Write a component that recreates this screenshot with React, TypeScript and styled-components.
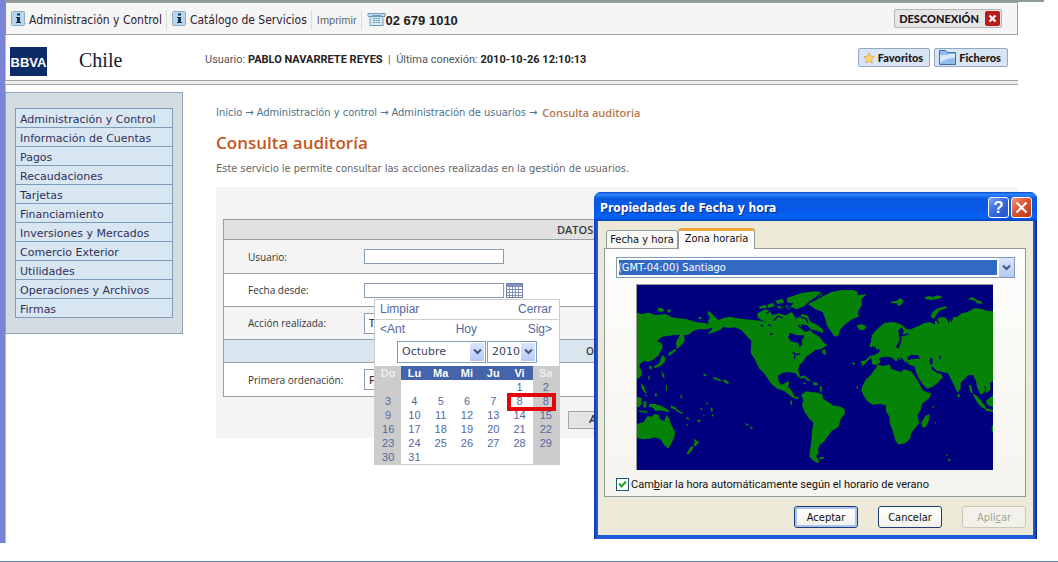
import React from 'react';
import styled, { createGlobalStyle } from 'styled-components';

const humanist = '"Open Sans", "Noto Sans", sans-serif';
const arial = '"Liberation Sans", Arial, sans-serif';
const verdana = '"DejaVu Sans", Verdana, sans-serif';
const tahoma = '"DejaVu Sans Condensed", "DejaVu Sans", Tahoma, sans-serif';

const GlobalStyle = createGlobalStyle`
  *, *::before, *::after { box-sizing: border-box; }
  body { margin: 0; background: #fff; color: #333; font-family: ${humanist}; font-size: 10px; }
  button, input, select { font: inherit; margin: 0; color: inherit; }
  h1, h2, p, ul, ol { margin: 0; padding: 0; }
  ul, ol { list-style: none; }
  a { color: inherit; text-decoration: none; }
`;

const Desktop = styled.div`
  position: relative;
  min-height: 100vh;
  display: flex;
  flex-direction: column;
  border-bottom: 1px solid #5f7fae;
`;
const Browser = styled.div`
  flex: 1;
  margin-bottom: 18px;
  border-left: 5px solid #7984d4;
  box-shadow: inset 1px 0 0 #b9bcc8;
`;
const TopEdge = styled.div`
  height: 2px;
  margin-right: 14px;
  background: #8f9d91;
`;
const Site = styled.div`
  margin-right: 40px;
`;
const UtilityBar = styled.header`
  height: 33px;
  display: flex;
  align-items: center;
  padding: 3px 15px 0 5px;
  background: #f5f5f5;
  border: 1px solid #a0a0a0;
  border-left-color: #8c8c8c;
`;
const UtilityLink = styled.a<{ $muted?: boolean }>`
  display: flex;
  align-items: center;
  gap: 4px;
  height: 20px;
  padding-right: 4px;
  margin-right: 5px;
  border-right: 1px solid #dcdcdc;
  font: ${p => (p.$muted ? '11px' : '12px')} ${p => (p.$muted ? arial : tahoma)};
  color: ${p => (p.$muted ? '#666' : '#2e2030')};
  svg { margin-top: -3px; }
`;
const Phone = styled.span`
  display: flex;
  align-items: center;
  font: bold 13px ${arial};
  color: #222;
  svg { margin-top: -2px; }
`;
const Push = styled.span`
  flex: 1;
`;
const SmallButton = styled.button<{ $tone: 'gray' | 'blue' }>`
  height: 19px;
  display: flex;
  align-items: center;
  gap: 3px;
  padding: 0 6px 0 4px;
  border: 1px solid ${p => (p.$tone === 'gray' ? '#b4b4b4' : '#92a9c0')};
  border-radius: 2px;
  background: ${p => (p.$tone === 'gray' ? '#e6e6e6' : '#d7e6f2')};
  color: #1c1416;
  font: 900 11px Lato, sans-serif;
  white-space: nowrap;
`;
const LogoutButton = styled(SmallButton)`
  gap: 6px;
  padding: 0 1px 0 4px;
  margin-top: -3px;
`;
const BrandBar = styled.div`
  display: flex;
  align-items: center;
  height: 45px;
  padding: 0 10px 0 5px;
`;
const Rule = styled.div`
  height: 5px;
  border: solid #a2a2a2;
  border-width: 1px 0;
  background: #ececec;
`;
const Logo = styled.span`
  width: 37px;
  height: 29px;
  margin-top: 8px;
  display: flex;
  align-items: center;
  justify-content: center;
  padding-top: 2px;
  background: #0b2c66;
  color: #fff;
  font: bold 13px ${arial};
`;
const Country = styled.span`
  width: 158px;
  padding: 6px 0 0 32px;
  font: 20px "Liberation Serif", serif;
  color: #10182c;
`;
const Session = styled.span`
  padding-top: 3px;
  color: #555;
  font: 11px Roboto, sans-serif;
  white-space: nowrap;
  b { color: #222; }
`;
const Actions = styled.div`
  display: flex;
  gap: 4px;
`;
const Columns = styled.div`
  display: flex;
  align-items: flex-start;
  padding-top: 7px;
`;
const Sidebar = styled.nav`
  flex: none;
  width: 178px;
  padding: 15px 9px;
  background: #d4dce1;
  border: 1px solid #8ba5bc;
`;
const Menu = styled.ul`
  border: 1px solid #7c9cba;
  border-bottom: 0;
  background: #d8e6f2;
`;
const MenuItem = styled.li`
  height: 19px;
  padding-left: 4px;
  border-bottom: 1px solid #7c9cba;
  font: 11px/22px ${verdana};
  color: #30305a;
  white-space: nowrap;
`;
const Main = styled.main`
  flex: 1;
  min-width: 0;
  margin: 0 40px 0 33px;
`;
const Crumbs = styled.ol`
  display: flex;
  gap: 3px;
  margin-top: 14px;
  font: 11px/14px ${tahoma};
  color: #4e7089;
  white-space: nowrap;
`;
const Current = styled.li`
  padding-left: 2px;
  font-family: ${humanist};
  font-weight: 600;
  color: #b5784c;
`;
const Title = styled.h1`
  margin-top: 11px;
  font: 600 17px/24px ${humanist};
  color: #c4571d;
`;
const Intro = styled.p`
  margin-top: 7px;
  font: 11px/14px ${tahoma};
  color: #666;
  white-space: nowrap;
`;
const Panel = styled.form`
  margin-top: 11px;
  padding: 32px 7px 9px;
  background: #f4f4f4;
`;
const FieldSet = styled.div`
  border: 1px solid #999fa4;
`;
const SectionTitle = styled.h2<{ $blue?: boolean }>`
  height: ${p => (p.$blue ? 24 : 20)}px;
  padding-left: ${p => (p.$blue ? 362 : 333)}px;
  border-bottom: 1px solid #999fa4;
  background: ${p => (p.$blue ? '#d9e6f0' : '#e1e1e1')};
  font: 600 ${p => (p.$blue ? '10px/22px' : '11px/20px')} ${humanist};
  color: #3a3a3a;
  ${p => p.$blue && 'border-top: 1px solid #999fa4;'}
`;
const Row = styled.div<{ $white?: boolean }>`
  height: 33px;
  display: flex;
  align-items: center;
  padding-left: 24px;
  background: ${p => (p.$white ? '#fff' : '#f4f4f4')};
  & + & { border-top: 1px solid #999fa4; }
`;
const RowLabel = styled.label`
  width: 116px;
  font-size: 10px;
  color: #333;
`;
const TextBox = styled.input`
  width: 140px;
  height: 15px;
  padding: 0 3px;
  border: 1px solid #8c9cae;
  background: #fff;
`;
const DateField = styled.div`
  position: relative;
  display: flex;
  align-items: center;
  gap: 2px;
`;
const IconButton = styled.button`
  display: flex;
  padding: 0;
  border: 0;
  background: none;
`;
const PlainSelect = styled.select`
  appearance: none;
  width: 140px;
  height: 21px;
  padding: 0 4px;
  border: 1px solid #8c9cae;
  border-radius: 0;
  background: #fff;
  font-weight: 600;
`;
const FormActions = styled.div`
  display: flex;
  padding: 14px 0 0 345px;
`;
const FormButton = styled.button`
  width: 64px;
  height: 18px;
  padding: 0 0 0 20px;
  border: 1px solid #a4a4a4;
  background: #e4e4e4;
  font: italic bold 10px/14px ${arial};
  text-align: left;
`;

/* Calendar */
const Popup = styled.div`
  position: absolute;
  z-index: 2;
  left: 10px;
  top: 16px;
  width: 186px;
  border: 1px solid #ccc;
  background: #fff;
  color: #5468a0;
  font: 11px ${arial};
`;
const PopupBar = styled.div<{ $line?: boolean }>`
  height: ${p => (p.$line ? 20 : 19)}px;
  display: flex;
  align-items: center;
  justify-content: space-between;
  padding: 0 7px 0 5px;
  border-bottom: ${p => (p.$line ? '1px solid #ccc' : '0')};
`;
const PopupButton = styled.button`
  padding: 0;
  border: 0;
  background: none;
  color: inherit;
  font: 12px ${arial};
`;
const Pickers = styled.div`
  display: flex;
  gap: 1px;
  padding: 2px 0 3px 22px;
`;
const SelectWrap = styled.span<{ $w: string; $h: number }>`
  position: relative;
  display: block;
  width: ${p => p.$w};
  height: ${p => p.$h}px;
`;
const PickerSelect = styled.select`
  appearance: none;
  width: 100%;
  height: 100%;
  padding: 0 4px;
  border: 1px solid #7f9db9;
  border-radius: 0;
  background: #fff;
  color: #3a4560;
  font: 11px ${verdana};
`;
const Arrow = styled.span`
  position: absolute;
  top: 2px;
  right: 2px;
  bottom: 2px;
  width: 14px;
  display: flex;
  align-items: center;
  justify-content: center;
  border-radius: 1px;
  background: linear-gradient(#dbe5fd, #b5c9f5);
  pointer-events: none;
`;
const Month = styled.table`
  width: 100%;
  table-layout: fixed;
  border-collapse: collapse;
  text-align: center;
  th, td { height: 14px; padding: 0; line-height: 14px; }
  th { background: #4464ac; color: #fff; }
  th:first-child, th:last-child, td:first-child, td:last-child { background: #ccc; }
  th:first-child, th:last-child { color: #eee; }
`;
const Highlight = styled.span`
  position: absolute;
  left: 132px;
  top: 93px;
  width: 49px;
  height: 18px;
  border: 4px solid #e3060a;
`;

/* Windows dialog */
const Dialog = styled.section`
  position: absolute;
  z-index: 5;
  left: 594px;
  top: 192px;
  width: 443px;
  padding: 0 4px 4px;
  border-radius: 7px 7px 0 0;
  background: linear-gradient(90deg, #1238a8, #1c5ad8 3px, #1c5ad8 440px, #0a1f80);
  font: 11px ${tahoma};
  color: #111;
`;
const TitleBar = styled.div`
  height: 29px;
  display: flex;
  align-items: center;
  gap: 2px;
  margin: 0 -4px;
  padding: 2px 5px 0 6px;
  border-radius: 7px 7px 0 0;
  background: linear-gradient(#0a48c8 0, #2f86ff 8%, #0a5ae0 22%, #0558e6 60%, #0663f8 88%, #0341b4 100%);
`;
const DialogTitle = styled.h2`
  flex: 1;
  font: bold 12px ${tahoma};
  color: #fff;
  text-shadow: 1px 1px 0 #0a2c80;
`;
const Caption = styled.button<{ $close?: boolean }>`
  width: 21px;
  height: 21px;
  display: flex;
  align-items: center;
  justify-content: center;
  padding: 0;
  border: 1px solid #fff;
  border-radius: 3px;
  background: ${p => (p.$close ? 'linear-gradient(135deg, #f0967c, #d8502c 50%, #c03c18)' : 'linear-gradient(135deg, #7ea2f0, #3468dc 50%, #2454c8)')};
  color: #fff;
  font: bold 17px ${arial};
`;
const DialogBody = styled.div`
  padding: 7px 7px 7px 6px;
  background: #ece9d8;
`;
const Tabs = styled.div`
  display: flex;
  align-items: flex-end;
  padding-left: 2px;
  margin-bottom: -1px;
`;
const Tab = styled.button<{ $active?: boolean }>`
  position: relative;
  height: ${p => (p.$active ? 21 : 19)}px;
  width: ${p => (p.$active ? 77 : 72)}px;
  padding: ${p => (p.$active ? '0 0 4px' : '0')};
  border: 1px solid #919b9c;
  border-top: ${p => (p.$active ? '3px solid #f0a53c' : '1px solid #919b9c')};
  border-bottom: ${p => (p.$active ? '0' : '1px solid #919b9c')};
  border-radius: 3px 3px 0 0;
  background: ${p => (p.$active ? '#fcfcfb' : '#f8f8f5')};
  white-space: nowrap;
`;
const TabPanel = styled.div`
  padding: 8px 10px 5px 11px;
  border: 1px solid #919b9c;
  background: linear-gradient(#fdfdfc, #f5f4ee);
`;
const ZoneSelect = styled.select`
  appearance: none;
  width: 100%;
  height: 100%;
  padding: 0 1px;
  border: 1px solid #7f9db9;
  border-radius: 0;
  background: #316ac5;
  color: #fff;
  box-shadow: inset 0 0 0 2px #fff;
`;
const ZoneArrow = styled(Arrow)`
  top: 1px;
  right: 1px;
  bottom: 1px;
  width: 17px;
  border-left: 2px solid #fff;
`;
const MapFrame = styled.div`
  margin: 6px 22px 7px 20px;
  border: 1px solid #9a9a9a;
  border-right: 0;
  border-bottom: 0;
  svg { display: block; width: 100%; }
`;
const CheckRow = styled.label`
  display: flex;
  align-items: center;
  gap: 2px;
  height: 14px;
  font: 11px Roboto, sans-serif;
`;
const CheckWrap = styled.span`
  position: relative;
  display: flex;
  svg { position: absolute; left: 2px; top: 2px; pointer-events: none; }
`;
const CheckBox = styled.input`
  appearance: none;
  width: 13px;
  height: 13px;
  border: 1px solid #1c5180;
  background: #fff;
`;
const DialogActions = styled.div`
  display: flex;
  justify-content: flex-end;
  gap: 20px;
  padding-top: 9px;
`;
const DialogButton = styled.button<{ $primary?: boolean }>`
  width: 64px;
  height: 22px;
  padding: 0;
  border: 1px solid #1c3c74;
  border-radius: 3px;
  background: linear-gradient(#fff, #f2f1ea);
  box-shadow: ${p => (p.$primary ? 'inset 0 0 0 2px #a9c4f0' : 'none')};
  &:disabled { border-color: #c9c7ba; background: #f3f2ea; color: #a5a394; }
`;

const Chevron = () => (
  <svg width="9" height="7" viewBox="0 0 9 7"><path d="M1 1.5 4.5 5 8 1.5" fill="none" stroke="#40567e" strokeWidth="2" /></svg>
);
const InfoIcon = () => (
  <svg width="14" height="15" viewBox="0 0 14 15">
    <rect x=".5" y=".5" width="13" height="14" rx="1" fill="#b9d5e9" stroke="#8daec6" />
    <rect x="6" y="2.5" width="3" height="2" fill="#14304c" />
    <path d="M5 6h4v5h1v1H5v-1h1V7H5z" fill="#14304c" />
  </svg>
);
const PhoneIcon = () => (
  <svg width="19" height="15" viewBox="0 0 19 15">
    <path d="M1 1.500h17v3h-4v-1H5v1H1z" fill="#c9deeb" stroke="#6e9ab8" />
    <path d="M4.500 4.500h10l1.500 2v7H3v-7z" fill="#d8e8f2" stroke="#6e9ab8" />
    <path d="M6 6.500h7M6 8.500h7M6 10.500h7" stroke="#6e9ab8" strokeDasharray="2 .5" />
  </svg>
);
const CloseIcon = () => (
  <svg width="15" height="15" viewBox="0 0 15 15">
    <rect width="15" height="15" rx="2" fill="#b81d1a" />
    <path d="m4.500 4.500 6 6m0-6-6 6" stroke="#fff" strokeWidth="2.200" />
  </svg>
);
const StarIcon = () => (
  <svg width="12" height="12" viewBox="0 0 12 12">
    <path d="m6 .8 1.600 3.400 3.700.5-2.700 2.600.7 3.800L6 9.300l-3.300 1.800.7-3.800L.7 4.700l3.700-.5z" fill="#f9d673" stroke="#dda654" strokeWidth=".8" />
  </svg>
);
const FolderIcon = () => (
  <svg width="17" height="15" viewBox="0 0 17 15">
    <path d="M.5 14.500v-14h6l1.500 2h8.500v12z" fill="#8fbdee" stroke="#3f6c9f" />
    <path d="M1 5h8l1-1h6v4q-8 0-15 5z" fill="#d4e7fb" />
  </svg>
);
const CalendarIcon = () => (
  <svg width="17" height="15" viewBox="0 0 17 15">
    <rect x=".5" y=".5" width="16" height="14" fill="#fff" stroke="#7480a8" />
    <rect x="1" y="1" width="15" height="3" fill="#8391c4" />
    <path d="M1 6.500h15M1 9.500h15M1 12.500h15M3.500 4v10M6.500 4v10M9.500 4v10M12.500 4v10" stroke="#8690b4" />
  </svg>
);

const WorldMap = () => (
  <svg viewBox="141 15 1068 555" role="img" aria-label="Mapa mundial">
    <rect x="141" y="15" width="1068" height="555" fill="#00007e" />
    <g fill="#068206">
      {/* eastern Asia and the western Pacific */}
      <path d="M141 98l14 4 22-4 20 8 30-4 18 10 45 6 28 8 30 4 22 12-20 6-24 0-18 6-12 10-14 2 2 16-12 16-12 10-2-22 12-22-24 2-28 4-18 14 14 4 4 14-12 24-18 14-14 6-10-4-12 8-4 10 8 14-2 14-10 8-7-3z" />
      <path d="M204 84l12 0 8 8-12 4-10-4zm28 4l10 2-2 8-8-2zM326 110l10 2-2 6-8-2zM218 225l8 8-2 14-14 12-16 6-2-6 14-8 6-14zM234 220l22-14 2 6-20 16zM178 256l8 4-2 10-6-4zM174 290l4-4 2 10-4 4zM214 270l8 14 2 12-6-6zM152 310l10 8 4 14 6 6-6 2-10-12zM196 338l6 4-4 8-4-2zM165 342l8 6-6 2zM228 315l3 0 0 18-3-4zM270 345l6 2 2 10-6-4z" />
      <path d="M141 350l14 4 0 18-8 10-6-2zM144 392l24 0 8 6-28-2zM160 365l10-2-2 22-8-4zM178 372l18 0 20 6 24 16-6 2-18-4-20 0-10-10-10-2zM242 376l18 8-2 6-16-6zM258 386l22 14-4 2-18-10zM290 410l8 6-4 4-6-6zM286 430l10 6-4 2zM322 420l10-2-2 8-8 0zM330 382l8 4-4 6zM348 366l8 4-6 4zM362 382l8 6-4 8-4-4zM366 402l6 2-6 8zM340 404l4 2-4 4z" />
      <path d="M141 432l20-6 12-18 12 2 8-8 14 2 2 12 14 8 6-20 8 10 6 18 12 24-2 18-12 22-16 2-14-20-16-6-16 4-20 2-18-4z" />
      <path d="M226 494l14 2-4 10-8-6zM310 474l10 8 8 4-10 12-8 0 4-12zM304 498l8 2-8 14-10 10-4-4zM340 280l10 4-4 6-6-4zM368 290l14 4 14 8-6 2-20-8zM398 300l10 0 10 8-6 4-10-6zM464 428l12 6-6 4zM478 438l12 6-6 4z" />
      {/* North America */}
      <path d="M384 120l16-6 20-4 30 6 40 4 20 2 30 4 30-2 24 6 20-6 18 8 6 18 10 4-8 12-20 0-20-8-6 14 8 12 22 4 4 14 8-6 0-16 6-10-2-16 18-6 12 12 18 10 14 18 10 8-20 12-16 2-10 8-16 10-10 16-12 12-4 14 6 18-4 6-8-14-24-4-16 2-14 10 2 18 10 8 14-8 8-2-4 16 8 8 12 22 14 2-6 6-16-6-22-18-22-8-20-16-18-28-16-16-14-28-12-20 2-36-12-12-18-20-20-8-18 2-14-4-12 10-22 8-16 4 16-16-12-8-2-14 6-14-8-8 4-10z" />
      <path d="M502 100l24-12 14 4 6 14 18-6 22 6 20-10 12 20 20-14 14 4 10 20 22 10 16 14-2 10-16-8-20-4-10-12-22-4-26 4-20-2-18-8-30 2-22-8-12-8zM506 80l22-6 2 10-20 2zM532 74l18-6 4 10-18 6zM556 62l22-6 4 12-20 4zM590 54l18-6 30-10 36-4 18 2 8 6-18 12-22 8-16 16-24 10-18-8 8-10-18-2zM560 78l20 2-4 10-8-2zM588 76l16 4-4 10-14-4z" />
      <path d="M628 292l12-6 14 8 8 10-10-2-8-8-12 2zM668 306l14 2 2 8-14 0zM640 308l8 0 0 4-8 0zM690 318l6 4-2 16-4-4zM696 212l8-6 6 18-12-2zM600 362l6 0 0 14-4-2z" />
      {/* Greenland and Iceland */}
      <path d="M654 72l20-10 26-14 24-12 30-6 36 0 14 6-2 10 28-4-16 16 2 16-12 20 2 16-20 8-24 18-12 14-4 16-12 4-10-14-14-20-4-20-8-20-22-8zM800 136l16-4 14 8-8 10-14 0z" />
      {/* South America */}
      <path d="M634 344l14-10 14 2 20 2 14 4 4 14 20 14 8 6 24 4 12 8 0 14-12 16-6 22-20 12-14 18-8 14-14 10-6 12 2 14-8 8 10 16-4 6-14-8-12-12 2-20 4-26 2-30 4-26-14-14-14-22-6-18 4-12z" />
      <path d="M688 532l14-2-2 6-12 2zM784 246l12 4-4 6zM800 318l4 0 0 8-4 0z" />
      {/* Europe and Asia */}
      <path d="M844 232l2 20 14 4 14-12 12-14 18 2 14 12 6-4-4-8 16 12 6 16 8-2-2-16 10 12 16 6 4 16 8 18 14 22 12 10 16-6 18-14 12-14-4-10-14-4-16-10 2-10 14 14 18 4 16 4 10 20 12 24 6 14 10-12 0-18 22-22 14-2 10 18 4 22 10 20 8-4-6-24 12 4 2 20 14-12-2-20 19-10 0-200-10-4-20-2-16-6-20-2-20 12-18 4-12 10-20 2-6 18-10-18-18 0-14 12 0 10-16-8-18 4-16 8-22 10-12 0-16-14-22-8-28 2-20 16-14 14-8 18 0 16 12 12 4-12 6 0 4 24-14 8-16 4-14 14-14 2 6 12-4 8z" />
      <path d="M852 172l10 4 2 16 8 12-12 6-4-14-4-10zM840 188l8 0 0 12-8 2zM900 66l20-4 10-8 12 8-10 14-8 2-4-8-14 0zM1004 52l14-4 10 4 14-6 16 4-10 6-24 4-16-2zM1022 112l4-14 14-12 28-8 2 6-22 8-10 14-4 10zM1134 58l12-8 14 10 14 4 4 8-16-2-8-8zM846 160l4 8-4 0z" />
      {/* Africa */}
      <path d="M864 254l16 4 22-6 10 4 0 12 20 8 10-8 20 6 10 8 12 20 8 16 8 14 20 8 4-2-6 16-22 18-4 18-10 16 6 22-10 14-14 16-4 18-14 14-20 4-10-12-6-24-10-26-2-22-10-16 0-18-18-4-22 2-16-10-12-18-6-16 6-18 8-14 14-12z" />
      <path d="M1006 408l12-6 0 16-10 22-10 4-4-16zM1026 382l6-6 2 4-6 4zM1034 426l4 0 0 4-4 0zM1104 340l8 6-6 8-4-6zM1068 524l4 0 0 4-4 0zM1074 538l8 0-2 6-6 0z" />
      {/* Indonesia */}
      <path d="M1148 340l14 8 14 18 12 16-4 6-14-10-12-16zM1186 384l23 6 0 6-22-4zM1188 362l21-16 0 34-16-4zM1168 314l12-6 6 24-6 8zM1136 316l8 0 4 24-6-2zM1205 440l4-6 0 24-4-4z" />
    </g>
    <g fill="#00007e">
      <path d="M952 232l12-8 20 2 6 10-18 0-18 4zM1022 232l6 4 0 16-6 2-4-10zM1048 228l4 0 0 10-4-2zM918 200l10-16 2-14-6-16 10-12 8 10-8 18 0 14-6 16-4 6zM866 236l12-6 18 6 8 14-14-4-14 4zM896 248l30 12 14 8-14 6-22-8zM930 232l8 4 18 26-8 2-12-12z" />
      <path d="M970 276l14 18 18 28-4 4-18-28-12-18zM1092 98l-6 28-4 0 4-28z" />
    </g>
    <g fill="none" stroke="#00007e" strokeWidth="4">
      <path d="M512 136l8 2m14-4l10 4m-4 26l8-4M608 218l12 6 10-2m-16 2l0 12M530 100l16-12 14 12 14-16 18 16 6-18 20 10M552 122l12-14 14 6m0-40l10 12 20-16M628 110l20 6 6 14m-30 6l22 18 16-6M664 64l40-32M926 168l30-6M1040 120l6 10m34-28l4 18m100-48l14 6" />
    </g>
  </svg>
);

const menu = ['Administración y Control', 'Información de Cuentas', 'Pagos', 'Recaudaciones', 'Tarjetas', 'Financiamiento', 'Inversiones y Mercados', 'Comercio Exterior', 'Utilidades', 'Operaciones y Archivos', 'Firmas'];
const crumbs = ['Inicio', 'Administración y control', 'Administración de usuarios'];
const days = ['Do', 'Lu', 'Ma', 'Mi', 'Ju', 'Vi', 'Sa'];
const weeks = [
  ['', '', '', '', '', '1', '2'],
  ['3', '4', '5', '6', '7', '8', '8'],
  ['9', '10', '11', '12', '13', '14', '15'],
  ['16', '17', '18', '19', '20', '21', '22'],
  ['23', '24', '25', '26', '27', '28', '29'],
  ['30', '31', '', '', '', '', ''],
];

const CalendarPopup = () => (
  <Popup>
    <PopupBar $line>
      <PopupButton type="button">Limpiar</PopupButton>
      <PopupButton type="button">Cerrar</PopupButton>
    </PopupBar>
    <PopupBar>
      <PopupButton type="button">&lt;Ant</PopupButton>
      <PopupButton type="button">Hoy</PopupButton>
      <PopupButton type="button">Sig&gt;</PopupButton>
    </PopupBar>
    <Pickers>
      <SelectWrap $w="89px" $h={22}>
        <PickerSelect aria-label="Mes"><option>Octubre</option></PickerSelect>
        <Arrow><Chevron /></Arrow>
      </SelectWrap>
      <SelectWrap $w="50px" $h={22}>
        <PickerSelect aria-label="Año"><option>2010</option></PickerSelect>
        <Arrow><Chevron /></Arrow>
      </SelectWrap>
    </Pickers>
    <Month>
      <thead><tr>{days.map(d => <th key={d}>{d}</th>)}</tr></thead>
      <tbody>
        {weeks.map((w, i) => <tr key={i}>{w.map((d, j) => <td key={j}>{d}</td>)}</tr>)}
      </tbody>
    </Month>
    <Highlight />
  </Popup>
);

const DateTimeDialog = () => (
  <Dialog role="dialog" aria-labelledby="dialog-title">
    <TitleBar>
      <DialogTitle id="dialog-title">Propiedades de Fecha y hora</DialogTitle>
      <Caption aria-label="Ayuda">?</Caption>
      <Caption $close aria-label="Cerrar">
        <svg width="13" height="13" viewBox="0 0 13 13"><path d="m1.500 1.500 10 10m0-10-10 10" stroke="#fff" strokeWidth="2.200" /></svg>
      </Caption>
    </TitleBar>
    <DialogBody>
      <Tabs role="tablist">
        <Tab role="tab">Fecha y hora</Tab>
        <Tab role="tab" $active aria-selected>Zona horaria</Tab>
      </Tabs>
      <TabPanel role="tabpanel">
        <SelectWrap $w="100%" $h={21}>
          <ZoneSelect aria-label="Zona horaria"><option>(GMT-04:00) Santiago</option></ZoneSelect>
          <ZoneArrow><Chevron /></ZoneArrow>
        </SelectWrap>
        <MapFrame><WorldMap /></MapFrame>
        <CheckRow>
          <CheckWrap>
            <CheckBox type="checkbox" defaultChecked />
            <svg width="9" height="9" viewBox="0 0 9 9"><path d="M1 3.500 3.500 6.500 8 1.500" fill="none" stroke="#21a121" strokeWidth="2" /></svg>
          </CheckWrap>
          <span>Cam<u>b</u>iar la hora automáticamente según el horario de verano</span>
        </CheckRow>
      </TabPanel>
      <DialogActions>
        <DialogButton $primary>Aceptar</DialogButton>
        <DialogButton>Cancelar</DialogButton>
        <DialogButton disabled>Apli<u>c</u>ar</DialogButton>
      </DialogActions>
    </DialogBody>
  </Dialog>
);

export default function App() {
  return (
    <Desktop>
      <GlobalStyle />
      <Browser>
        <TopEdge />
        <Site>
          <UtilityBar>
            <UtilityLink href="#"><InfoIcon />Administración y Control</UtilityLink>
            <UtilityLink href="#"><InfoIcon />Catálogo de Servicios</UtilityLink>
            <UtilityLink href="#" $muted>Imprimir</UtilityLink>
            <Phone><PhoneIcon />02 679 1010</Phone>
            <Push />
            <LogoutButton $tone="gray">DESCONEXIÓN <CloseIcon /></LogoutButton>
          </UtilityBar>
          <BrandBar>
            <Logo>BBVA</Logo>
            <Country>Chile</Country>
            <Session>Usuario: <b>PABLO NAVARRETE REYES</b> &nbsp;|&nbsp; Última conexión: <b>2010-10-26 12:10:13</b></Session>
            <Push />
            <Actions>
              <SmallButton $tone="blue"><StarIcon />Favoritos</SmallButton>
              <SmallButton $tone="blue"><FolderIcon />Ficheros</SmallButton>
            </Actions>
          </BrandBar>
          <Rule />
        </Site>
        <Columns>
          <Sidebar>
            <Menu>{menu.map(m => <MenuItem key={m}><a href="#">{m}</a></MenuItem>)}</Menu>
          </Sidebar>
          <Main>
            <Crumbs>
              {crumbs.map(c => <li key={c}><a href="#">{c}</a> →</li>)}
              <Current>Consulta auditoria</Current>
            </Crumbs>
            <Title>Consulta auditoría</Title>
            <Intro>Este servicio le permite consultar las acciones realizadas en la gestión de usuarios.</Intro>
            <Panel>
              <FieldSet>
                <SectionTitle>DATOS</SectionTitle>
                <Row>
                  <RowLabel htmlFor="usuario">Usuario:</RowLabel>
                  <TextBox id="usuario" />
                </Row>
                <Row $white>
                  <RowLabel htmlFor="desde">Fecha desde:</RowLabel>
                  <DateField>
                    <TextBox id="desde" />
                    <IconButton type="button" aria-label="Abrir calendario"><CalendarIcon /></IconButton>
                    <CalendarPopup />
                  </DateField>
                </Row>
                <Row>
                  <RowLabel htmlFor="accion">Acción realizada:</RowLabel>
                  <PlainSelect id="accion"><option>Todas</option></PlainSelect>
                </Row>
                <SectionTitle $blue>O</SectionTitle>
                <Row $white>
                  <RowLabel htmlFor="orden">Primera ordenación:</RowLabel>
                  <PlainSelect id="orden"><option>Fecha</option></PlainSelect>
                </Row>
              </FieldSet>
              <FormActions><FormButton type="button">Aceptar</FormButton></FormActions>
            </Panel>
          </Main>
        </Columns>
      </Browser>
      <DateTimeDialog />
    </Desktop>
  );
}
